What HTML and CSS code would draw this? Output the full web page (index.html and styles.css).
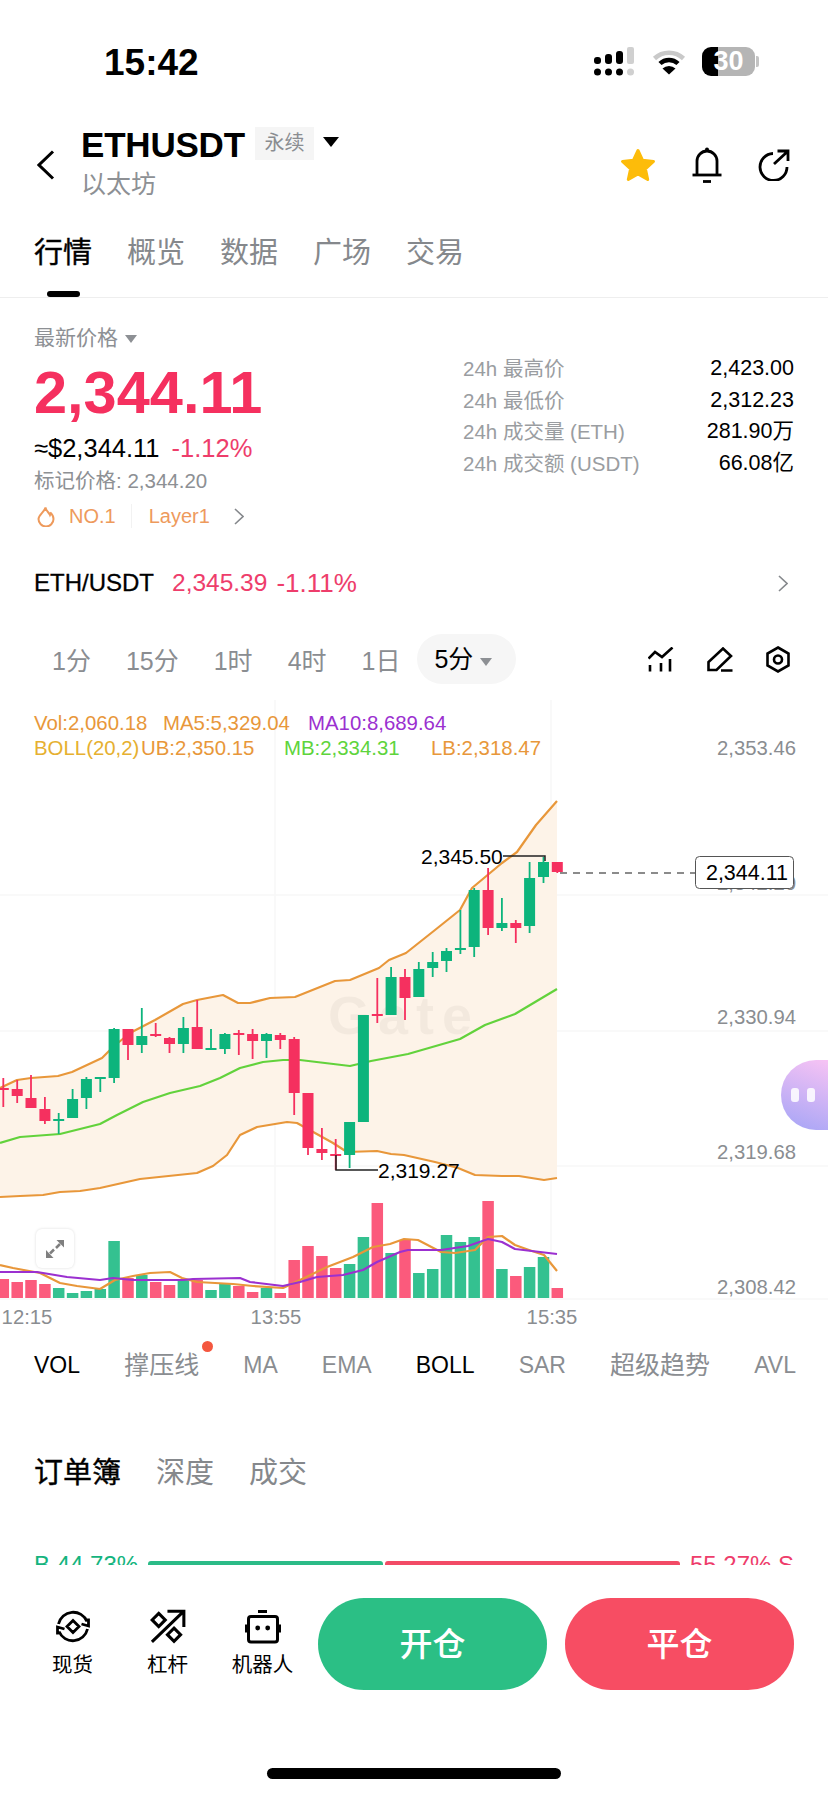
FILE: index.html
```html
<!DOCTYPE html>
<html lang="zh">
<head>
  <meta charset="utf-8">
  <title>ETHUSDT</title>
  <link rel="stylesheet" href="styles.css">
</head>
<body>
  <div class="page">
    <div class="status-bar">
      <span class="clock">15:42</span>
      <div class="status-icons">
        <svg class="signal" viewBox="0 0 42 30">
          <g fill="#000">
            <rect x="0" y="10" width="7" height="7" rx="3"/><rect x="11" y="7" width="7" height="10" rx="3"/><rect x="22" y="4" width="7" height="13" rx="3"/>
            <circle cx="3.5" cy="25" r="3.5"/><circle cx="14.5" cy="25" r="3.5"/><circle cx="25.5" cy="25" r="3.5"/>
          </g>
          <rect x="33" y="0" width="7" height="17" rx="2" fill="#d0d0d0"/><circle cx="36.5" cy="25" r="3.5" fill="#d0d0d0"/>
        </svg>
        <svg class="wifi" viewBox="0 0 34 26">
          <path d="M2.5 9.5A21 21 0 0 1 31.5 9.5" fill="none" stroke="#c9c9c9" stroke-width="4.5"/>
          <path d="M8 14.5A13 13 0 0 1 26 14.5" fill="none" stroke="#000" stroke-width="4.5"/>
          <path d="M17 25.5L10.5 19.5A9.5 9.5 0 0 1 23.5 19.5Z" fill="#000"/>
        </svg>
        <div class="battery">30</div>
      </div>
    </div>

    <div class="header">
      <svg class="back" viewBox="0 0 18 30"><path d="M16 1.5L2 15L16 28.5" fill="none" stroke="#000" stroke-width="3"/></svg>
      <div class="title-block">
        <div class="title-row">
          <span class="symbol">ETHUSDT</span>
          <span class="badge">永续</span>
          <span class="caret"></span>
        </div>
        <div class="subtitle">以太坊</div>
      </div>
      <div class="header-actions">
        <svg class="icon-star" viewBox="0 0 36 34"><path d="M18 2.5L22.6 12.3L33.5 13.4L25.4 20.8L27.7 31.5L18 26L8.3 31.5L10.6 20.8L2.5 13.4L13.4 12.3Z" fill="#fdbc0a" stroke="#fdbc0a" stroke-width="3" stroke-linejoin="round"/></svg>
        <svg class="icon-bell" viewBox="0 0 30 36">
          <g fill="none" stroke="#000" stroke-width="2.8"><path d="M0.5 28H29.5"/><path d="M5 28V14A10 10 0 0 1 25 14V28"/><path d="M11 34.5H19"/></g>
          <circle cx="15" cy="2.5" r="2" fill="#000"/>
        </svg>
        <svg class="icon-share" viewBox="0 0 32 32"><path d="M15 4.5A13.5 13.5 0 1 0 29 18M16 15L29 3M19.5 2H30V12" fill="none" stroke="#000" stroke-width="2.8"/></svg>
      </div>
    </div>

    <div class="tabs">
      <div class="tab active">行情</div>
      <div class="tab">概览</div>
      <div class="tab">数据</div>
      <div class="tab">广场</div>
      <div class="tab">交易</div>
    </div>

    <div class="stats">
      <div class="stats-left">
        <div class="price-label">最新价格<span class="caret-gray"></span></div>
        <div class="price">2,344.11</div>
        <div class="usd-row"><span>≈$2,344.11</span><span class="red">-1.12%</span></div>
        <div class="mark-price">标记价格: 2,344.20</div>
        <div class="rank-row">
          <svg class="flame" viewBox="0 0 18 21"><path d="M8.5 1.5C9 5 12 6.5 13 9C13.5 8 13.5 7 13.3 6.5C15.5 8.5 16.5 10.5 16.5 13A7.5 7.5 0 0 1 1.5 13C1.5 9 7 6.5 8.5 1.5Z" fill="none" stroke="#ee9a5c" stroke-width="2"/></svg>
          <span>NO.1</span>
          <span class="rank-divider"></span>
          <span>Layer1</span>
          <svg class="chevron rank-chevron" viewBox="0 0 10 17"><path d="M1 1L9 8.5L1 16" fill="none" stroke="#85888c" stroke-width="1.6"/></svg>
        </div>
      </div>
      <div class="stats-right">
        <div class="stat-row"><span class="stat-label">24h 最高价</span><span class="stat-value">2,423.00</span></div>
        <div class="stat-row"><span class="stat-label">24h 最低价</span><span class="stat-value">2,312.23</span></div>
        <div class="stat-row"><span class="stat-label">24h 成交量 (ETH)</span><span class="stat-value">281.90万</span></div>
        <div class="stat-row"><span class="stat-label">24h 成交额 (USDT)</span><span class="stat-value">66.08亿</span></div>
      </div>
    </div>

    <div class="pair-row">
      <span class="pair-name">ETH/USDT</span>
      <span class="red">2,345.39</span>
      <span class="red pair-change">-1.11%</span>
      <svg class="chevron pair-chevron" viewBox="0 0 10 17"><path d="M1 1L9 8.5L1 16" fill="none" stroke="#85888c" stroke-width="1.6"/></svg>
    </div>

    <div class="periods">
      <span>1分</span>
      <span>15分</span>
      <span>1时</span>
      <span>4时</span>
      <span>1日</span>
      <span class="period-pill">5分<span class="caret-gray"></span></span>
      <div class="chart-tools">
        <svg viewBox="0 0 26 25"><path d="M0.5 11.5L7 5L14 10L24.5 0.5M2 18V24.500M13 16V24.500M22 12V24.500" fill="none" stroke="#000" stroke-width="2.6"/></svg>
        <svg viewBox="0 0 26 25"><path d="M1.500 23V15L16 1.500L24 9L9.500 23ZM14 23.500H25.500" fill="none" stroke="#000" stroke-width="2.600"/></svg>
        <svg class="tool-hex" viewBox="0 0 24 27"><path d="M12 1.500L22.500 7.500V19.500L12 25.500L1.500 19.500V7.500Z" fill="none" stroke="#000" stroke-width="2.600"/><circle cx="12" cy="13.500" r="4" fill="none" stroke="#000" stroke-width="2.600"/></svg>
      </div>
    </div>

    <div class="chart">
      <svg class="chart-svg" viewBox="0 700 828 630">
        <!-- grid -->
        <path class="grid" d="M0 895H828M0 1031H828M0 1166H828M0 1299H828M275 700V1299M551 700V1299"/>

        <!-- bollinger band -->
        <polygon class="band" points="0,1088 17,1080 31,1078 58,1076 72,1072 87,1065 102,1058 113,1047 130,1033 155,1020 183,1004 197,1000 223,995 238,1003 250,1003 270,998 295,997 335,981 350,980 379,968 389,960 406,953 435,930 460,910 472,888 502,863 517,852 536,825 557,801 557,1178 544,1180 519,1176 502,1176 475,1175 458,1168 435,1162 404,1155 391,1154 377,1151 347,1152 333,1143 297,1123 287,1122 257,1127 240,1135 227,1155 213,1166 197,1173 140,1179 100,1188 80,1191 60,1192 43,1195 20,1196 0,1197"/>

        <!-- watermark -->
        <text class="watermark" x="328" y="1034">Gate</text>

        <polyline class="line-orange" points="0,1088 17,1080 31,1078 58,1076 72,1072 87,1065 102,1058 113,1047 130,1033 155,1020 183,1004 197,1000 223,995 238,1003 250,1003 270,998 295,997 335,981 350,980 379,968 389,960 406,953 435,930 460,910 472,888 502,863 517,852 536,825 557,801"/>
        <polyline class="line-orange" points="0,1197 20,1196 43,1195 60,1192 80,1191 100,1188 140,1179 197,1173 213,1166 227,1155 240,1135 257,1127 287,1122 297,1123 333,1143 347,1152 377,1151 391,1154 404,1155 435,1162 458,1168 475,1175 502,1176 519,1176 544,1180 557,1178"/>
        <polyline class="line-green" points="0,1143 20,1137 60,1134 100,1124 117,1115 143,1102 170,1093 200,1086 220,1078 240,1068 263,1062 283,1060 300,1060 350,1066 371,1061 408,1054 460,1039 485,1025 515,1014 557,989"/>

        <!-- candles -->
        <path class="wick wick-red" d="M3.300 1078V1107M17.200 1080V1103M31 1075V1108M44.900 1097V1124M128 1029V1060M155.700 1023V1037M169.500 1037V1053M197.200 1000V1049M238.800 1030V1055M252.600 1029V1059M280.300 1033V1049M294.200 1037V1115M308 1093V1155M321.900 1128V1160M335.700 1139V1170M377.300 978V1023M405 969V1020M488.100 868V935M515.800 920V943M557.300 862V873"/>
        <path class="body body-red" d="M3.300 1088V1090M17.200 1089V1096M31 1098V1108M44.900 1109V1121M128 1029V1045M155.700 1034V1036M169.500 1038V1044M197.200 1027V1049M238.800 1033V1035M252.600 1034V1041M280.300 1035V1040M294.200 1039V1093M308 1093V1148M321.900 1149V1153M335.700 1154V1156M377.300 1014V1016M405 977V998M488.100 890V928M515.800 923V928M557.300 862V872"/>
        <path class="wick wick-green" d="M58.700 1113V1134M72.600 1089V1118M86.400 1077V1109M100.300 1077V1092M114.100 1028V1083M141.800 1008V1053M183.400 1017V1053M211 1029V1050M224.900 1033V1054M266.500 1033V1058M349.600 1122V1168M363.400 1015V1122M391.100 967V1015M418.800 962V997M432.700 952V977M446.500 948V972M460.400 910V954M474.200 888V957M501.900 898V931M529.600 862V933M543.500 857V883"/>
        <path class="body body-green" d="M58.700 1119V1121M72.600 1099V1118M86.400 1079V1098M100.300 1077V1079M114.100 1029V1078M141.800 1036V1045M183.400 1028V1044M211 1048V1050M224.900 1034V1049M266.500 1034V1041M349.600 1122V1155M363.400 1015V1122M391.100 977V1015M418.800 969V997M432.700 962V968M446.500 951V961M460.400 948V950M474.200 890V947M501.900 923V928M529.600 878V926M543.500 862V877"/>

        <!-- volume -->
        <path class="vol vol-red" d="M3.300 1279V1298M17.200 1282V1298M31 1280V1298M44.900 1284V1298M128 1278V1298M155.700 1282V1298M169.500 1285V1298M197.200 1280V1298M238.800 1286V1298M252.600 1292V1298M280.300 1293V1298M294.200 1260V1298M308 1246V1298M321.900 1256V1298M335.700 1268V1298M377.300 1203V1298M405 1240V1298M488.100 1201V1298M515.800 1276V1298M557.300 1288V1298"/>
        <path class="vol vol-green" d="M58.700 1288V1298M72.600 1293V1298M86.400 1291V1298M100.300 1289V1298M114.100 1241V1298M141.800 1275V1298M183.400 1280V1298M211 1290V1298M224.900 1284V1298M266.500 1288V1298M349.600 1264V1298M363.400 1237V1298M391.100 1253V1298M418.800 1273V1298M432.700 1269V1298M446.500 1235V1298M460.400 1242V1298M474.200 1237V1298M501.900 1269V1298M529.600 1267V1298M543.500 1257V1298"/>
        <polyline class="line-orange" points="0,1265 13,1268 40,1273 60,1283 77,1286 100,1289 115,1280 133,1276 150,1273 170,1272 182,1278 197,1282 233,1284 253,1286 283,1288 300,1280 327,1267 353,1257 373,1247 390,1244 404,1239 418,1240 441,1252 455,1253 475,1250 488,1237 502,1236 515,1245 529,1250 544,1255 557,1271"/>
        <polyline class="line-purple" points="0,1272 37,1272 67,1277 100,1280 113,1278 133,1280 183,1280 193,1279 240,1278 250,1282 283,1286 300,1282 317,1277 343,1275 363,1270 377,1262 400,1252 408,1250 441,1250 468,1246 488,1239 502,1242 515,1249 557,1254"/>

        <!-- legend -->
        <text class="legend c-orange" x="34" y="730">Vol:2,060.18</text>
        <text class="legend c-orange" x="163" y="730">MA5:5,329.04</text>
        <text class="legend c-purple" x="308" y="730">MA10:8,689.64</text>
        <text class="legend c-yellow" x="34" y="755">BOLL(20,2)</text>
        <text class="legend c-orange" x="141" y="755">UB:2,350.15</text>
        <text class="legend c-green" x="284" y="755">MB:2,334.31</text>
        <text class="legend c-orange" x="431" y="755">LB:2,318.47</text>

        <!-- price axis -->
        <text class="axis" x="796" y="755">2,353.46</text>
        <text class="axis" x="796" y="890">2,342.20</text>
        <text class="axis" x="796" y="1024">2,330.94</text>
        <text class="axis" x="796" y="1159">2,319.68</text>
        <text class="axis" x="796" y="1294">2,308.42</text>

        <!-- time axis -->
        <text class="time" x="27" y="1324">12:15</text>
        <text class="time" x="276" y="1324">13:55</text>
        <text class="time" x="552" y="1324">15:35</text>

        <!-- high / low callouts -->
        <path class="callout" d="M503 856H545V861M336 1155V1170H378"/>
        <text class="callout-text" x="421" y="864">2,345.50</text>
        <text class="callout-text" x="378" y="1178">2,319.27</text>

        <!-- last price -->
        <path class="last-line" d="M560 873H695"/>
        <rect class="last-box" x="695.500" y="856.500" width="98" height="32" rx="4"/>
        <text class="last-text" x="747" y="880">2,344.11</text>
      </svg>

      <div class="expand-btn">
        <svg viewBox="0 0 18 19"><path d="M10.500 1H18V8.500ZM0 11V19H7.500Z" fill="#7f7f7f"/><path d="M14 5L10 9M8 10.500L4 14.500" stroke="#7f7f7f" stroke-width="2.500" fill="none"/></svg>
      </div>
      <div class="float-bot"><span></span><span></span></div>
    </div>

    <div class="indicators">
      <span class="on">VOL</span>
      <span class="cjk with-dot">撑压线</span>
      <span>MA</span>
      <span>EMA</span>
      <span class="on">BOLL</span>
      <span>SAR</span>
      <span class="cjk">超级趋势</span>
      <span>AVL</span>
    </div>

    <div class="book-tabs">
      <span class="on">订单簿</span>
      <span>深度</span>
      <span>成交</span>
    </div>

    <div class="ratio">
      <span class="ratio-buy">B 44.73%</span>
      <div class="ratio-bar"><i class="bar-buy"></i><i class="bar-sell"></i></div>
      <span class="ratio-sell">55.27% S</span>
    </div>

    <div class="bottom-nav">
      <div class="nav-item">
        <svg viewBox="0 0 36 35"><path d="M3.500 15A15 15 0 0 1 32 12.500M26.500 15L33.500 17V9.500M32.500 20A15 15 0 0 1 4 22.500M9.500 20L2.500 18V25.500M18 11.500L24 17.500L18 23.500L12 17.500Z" fill="none" stroke="#000" stroke-width="2.800"/></svg>
        <span>现货</span>
      </div>
      <div class="nav-item">
        <svg viewBox="0 0 32 32"><path d="M1.300 30L30.500 2M15.500 2H30.500V16.500M7.500 4L13.500 10L7.500 16L1.500 10ZM21.500 17.500L27.500 23.500L21.500 29.500L15.500 23.500Z" fill="none" stroke="#000" stroke-width="2.800"/></svg>
        <span>杠杆</span>
      </div>
      <div class="nav-item">
        <svg viewBox="0 0 36 34"><path d="M13 2H22" stroke="#000" stroke-width="3"/><rect x="3.500" y="7" width="29" height="25.500" rx="2.500" fill="none" stroke="#000" stroke-width="3"/><path d="M0 15H2.500V23H0ZM33.500 15H36V23H33.500Z" fill="#000"/><circle cx="12.700" cy="18.500" r="2.400"/><circle cx="22.700" cy="18.500" r="2.400"/></svg>
        <span>机器人</span>
      </div>
      <button class="trade-btn open">开仓</button>
      <button class="trade-btn close">平仓</button>
    </div>

    <div class="home-bar"></div>
  </div>
</body>
</html>
```

FILE: styles.css
```css
* {
  box-sizing: border-box;
}

body {
  margin: 0;
  background: #fff;
  font-family: "Liberation Sans", "Noto Sans CJK SC", sans-serif;
  color: #000;
}

.page {
  width: 828px;
  height: 1796px;
  overflow: hidden;
  display: flex;
  flex-direction: column;
}

.red {
  color: #ee3d6b;
}

/* Status bar */
.status-bar {
  height: 105px;
  padding: 45px 0 0 104px;
  display: flex;
}

.clock {
  width: 96px;
  font-size: 37px;
  line-height: 36px;
  font-weight: bold;
}

.status-icons {
  margin-left: 394px;
  display: flex;
  gap: 16px;
  margin-top: 2px;
}

.signal {
  width: 42px;
  height: 30px;
}

.wifi {
  width: 34px;
  height: 26px;
  margin-top: 2px;
}

.battery {
  position: relative;
  width: 53px;
  height: 29px;
  border-radius: 9px;
  background: linear-gradient(90deg, #000 30%, #b5b5b5 30%);
  color: #fff;
  font-size: 27px;
  font-weight: bold;
  line-height: 29px;
  text-align: center;
}

.battery::after {
  content: "";
  position: absolute;
  left: 54px;
  top: 9px;
  width: 3px;
  height: 11px;
  border-radius: 0 2px 2px 0;
  background: #c4c4c4;
}

/* Header */
.header {
  height: 115px;
  padding: 0 38px 0 37px;
  display: flex;
}

.back {
  width: 18px;
  height: 30px;
  margin-top: 45px;
}

.title-block {
  margin: 20px 0 0 26px;
}

.title-row {
  display: flex;
  align-items: center;
  height: 40px;
}

.symbol {
  font-size: 35px;
  font-weight: bold;
  letter-spacing: -0.2px;
}

.badge {
  width: 59px;
  height: 33px;
  margin: -3px 0 0 10px;
  background: #f5f5f5;
  color: #8a8d91;
  font-size: 20px;
  line-height: 33px;
  text-align: center;
}

.caret {
  width: 0;
  height: 0;
  margin: -6px 0 0 9px;
  border-left: 8px solid transparent;
  border-right: 8px solid transparent;
  border-top: 10px solid #000;
}

.subtitle {
  margin-top: 4px;
  color: #8d9094;
  font-size: 25px;
  line-height: 30px;
}

.header-actions {
  margin: 42px 0 0 auto;
  height: 36px;
  display: flex;
  align-items: center;
  gap: 36px;
}

.icon-star {
  width: 36px;
  height: 34px;
}

.icon-bell {
  width: 30px;
  height: 36px;
}

.icon-share {
  width: 32px;
  height: 32px;
}

/* Main tabs */
.tabs {
  height: 78px;
  padding: 18px 0 0 34px;
  display: flex;
  gap: 35px;
  border-bottom: 1px solid #eee;
  color: #85888c;
  font-size: 29px;
  line-height: 30px;
}

.tab.active {
  color: #000;
  -webkit-text-stroke: 0.4px #000;
}

.tab.active::after {
  content: "";
  display: block;
  width: 33px;
  height: 6px;
  margin: 23px auto 0;
  border-radius: 3px;
  background: #000;
}

/* Price stats */
.stats {
  display: flex;
  justify-content: space-between;
  padding: 26px 34px 0;
}

.price-label {
  color: #8d9094;
  font-size: 21px;
  line-height: 28px;
}

.caret-gray {
  display: inline-block;
  width: 0;
  height: 0;
  margin-left: 7px;
  vertical-align: 2px;
  border-left: 6px solid transparent;
  border-right: 6px solid transparent;
  border-top: 8px solid #8d9094;
}

.price {
  margin-top: 11px;
  color: #f5305f;
  font-size: 59.500px;
  font-weight: bold;
  line-height: 60px;
}

.usd-row {
  margin-top: 10px;
  display: flex;
  gap: 12px;
  font-size: 25.500px;
  line-height: 30px;
}

.mark-price {
  margin-top: 5px;
  color: #8d9094;
  font-size: 20.500px;
  line-height: 26px;
}

.rank-row {
  margin-top: 9px;
  display: flex;
  align-items: center;
  color: #ee9a5c;
  font-size: 20px;
  line-height: 26px;
}

.flame {
  width: 18px;
  height: 21px;
  margin: 0 14px 0 3px;
}

.rank-divider {
  width: 1px;
  height: 24px;
  margin: 0 17px 0 15px;
  background: #f2f2f2;
}

.chevron {
  width: 10px;
  height: 17px;
}

.rank-chevron {
  margin-left: 24px;
}

.stats-right {
  width: 331px;
  padding-top: 29px;
}

.stat-row {
  display: flex;
  justify-content: space-between;
  font-size: 20.500px;
  line-height: 31.700px;
}

.stat-label {
  color: #9a9da1;
}

.stat-value {
  font-size: 21.500px;
}

/* Pair row */
.pair-row {
  height: 44px;
  margin-top: 32px;
  padding: 0 40px 0 34px;
  display: flex;
  align-items: center;
  gap: 12px;
  font-size: 24.500px;
}

.pair-name {
  margin-right: 6px;
  font-size: 24px;
  -webkit-text-stroke: 0.3px #000;
}

.pair-change {
  margin-left: -3px;
  font-size: 26px;
}

.pair-chevron {
  margin-left: auto;
}

/* Period selector */
.periods {
  height: 50px;
  margin-top: 29px;
  padding: 0 38px 0 52px;
  display: flex;
  align-items: center;
  gap: 35px;
  color: #8a8d91;
  font-size: 25px;
}

.period-pill {
  height: 50px;
  margin-left: -18px;
  padding: 0 24px 0 17px;
  border-radius: 25px;
  background: #f6f6f6;
  color: #000;
  line-height: 50px;
  white-space: nowrap;
}

.chart-tools {
  margin-left: auto;
  display: flex;
  align-items: center;
  gap: 33px;
}

.chart-tools svg {
  width: 26px;
  height: 25px;
}

.chart-tools .tool-hex {
  width: 24px;
  height: 27px;
}

/* Chart */
.chart {
  position: relative;
  height: 630px;
  margin-top: 16px;
}

.chart-svg {
  display: block;
  width: 828px;
  height: 630px;
}

.grid {
  fill: none;
  stroke: #f8f8f8;
  stroke-width: 1.500;
}

.watermark {
  fill: #000;
  fill-opacity: 0.04;
  font-size: 54px;
  font-weight: bold;
  letter-spacing: 8px;
}

.band {
  fill: #fdf3e8;
}

.line-orange,
.line-green,
.line-purple {
  fill: none;
  stroke-width: 2.200;
  stroke-linejoin: round;
}

.line-orange {
  stroke: #e8973a;
}

.line-green {
  stroke: #62d23c;
}

.line-purple {
  stroke: #9b30d0;
}

.wick {
  fill: none;
  stroke-width: 1.800;
}

.body {
  fill: none;
  stroke-width: 11;
}

.wick-red,
.body-red {
  stroke: #f5305f;
}

.wick-green,
.body-green {
  stroke: #0db47c;
}

.vol {
  fill: none;
  stroke-width: 11.500;
}

.vol-red {
  stroke: #fb5a7c;
}

.vol-green {
  stroke: #34c190;
}

.legend {
  font-size: 20.400px;
}

.c-orange {
  fill: #e8973a;
}

.c-purple {
  fill: #9b30d0;
}

.c-yellow {
  fill: #e6b030;
}

.c-green {
  fill: #5ed43c;
}

.axis,
.time {
  fill: #8a8d91;
  font-size: 20.300px;
}

.axis {
  text-anchor: end;
}

.time {
  text-anchor: middle;
}

.callout {
  fill: none;
  stroke: #222;
  stroke-width: 1.500;
}

.callout-text {
  fill: #000;
  font-size: 21px;
}

.last-line {
  fill: none;
  stroke: #666;
  stroke-width: 1.500;
  stroke-dasharray: 7 6;
}

.last-box {
  fill: #fff;
  stroke: #555;
}

.last-text {
  fill: #000;
  font-size: 21.500px;
  text-anchor: middle;
}

.expand-btn {
  position: absolute;
  left: 36px;
  top: 529px;
  width: 38px;
  height: 39px;
  display: flex;
  align-items: center;
  justify-content: center;
  border-radius: 6px;
  background: #fff;
  box-shadow: 0 0 3px rgba(0, 0, 0, 0.14);
}

.expand-btn svg {
  width: 18px;
  height: 19px;
}

.float-bot {
  position: absolute;
  right: 0;
  top: 360px;
  width: 47px;
  height: 70px;
  padding-right: 4px;
  display: flex;
  align-items: center;
  justify-content: center;
  gap: 8px;
  border-radius: 35px 0 0 35px;
  background: linear-gradient(20deg, #a4a4f6, #f7c3f4);
}

.float-bot span {
  width: 8px;
  height: 14px;
  border-radius: 3px;
  background: #fff;
  opacity: 0.85;
}

/* Indicator tabs */
.indicators {
  margin-top: 19px;
  padding: 0 32px 0 34px;
  display: flex;
  justify-content: space-between;
  color: #8a8d91;
  font-size: 23px;
  line-height: 32px;
}

.indicators .cjk {
  font-size: 25px;
}

.indicators .on {
  color: #000;
}

.with-dot {
  position: relative;
}

.with-dot::after {
  content: "";
  position: absolute;
  right: -14px;
  top: -8px;
  width: 11px;
  height: 11px;
  border-radius: 50%;
  background: #f4573f;
}

/* Order book */
.book-tabs {
  margin-top: 74px;
  padding-left: 34px;
  display: flex;
  gap: 35px;
  color: #85888c;
  font-size: 29px;
  line-height: 36px;
}

.book-tabs .on {
  color: #000;
  -webkit-text-stroke: 0.4px #000;
}

.ratio {
  height: 10px;
  margin-top: 64px;
  padding: 0 34px;
  display: flex;
  justify-content: space-between;
  overflow: hidden;
  font-size: 24px;
  line-height: 20px;
}

.ratio-buy {
  color: #14b47e;
}

.ratio-sell {
  color: #ee3d6b;
}

.ratio-bar {
  width: 532px;
  height: 10px;
  padding-top: 6px;
  display: flex;
  gap: 2px;
}

.ratio-bar i {
  height: 8px;
  border-radius: 3px;
}

.bar-buy {
  width: 235px;
  background: #2bbb87;
}

.bar-sell {
  width: 295px;
  background: #f24b66;
}

/* Bottom nav */
.bottom-nav {
  padding: 33px 34px 0 25px;
  display: flex;
}

.nav-item {
  width: 95px;
  padding-top: 11px;
  display: flex;
  flex-direction: column;
  align-items: center;
  gap: 9px;
  font-size: 20.500px;
  line-height: 24px;
}

.nav-item svg {
  height: 35px;
  width: 36px;
}

.trade-btn {
  width: 229px;
  height: 92px;
  padding: 0 0 4px;
  border: none;
  border-radius: 46px;
  color: #fff;
  font-family: inherit;
  font-size: 33px;
  font-weight: 500;
}

.trade-btn.open {
  margin-left: 8px;
  background: #2bbf85;
}

.trade-btn.close {
  margin-left: 18px;
  background: #f74d63;
}

.home-bar {
  width: 294px;
  height: 11px;
  margin: 78px 0 0 267px;
  border-radius: 6px;
  background: #000;
}
```
